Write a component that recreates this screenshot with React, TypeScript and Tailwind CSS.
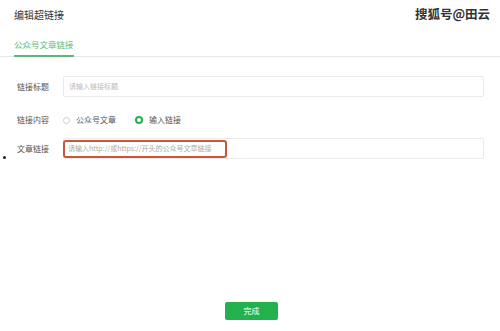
import React from 'react';

const cn = '"Noto Sans CJK SC", "Liberation Sans", sans-serif';

export default function App() {
  return (
    <div className="relative w-[500px] h-[331px] bg-white overflow-hidden" style={{ fontFamily: cn }}>
      {/* watermark */}
      <div className="absolute right-[10px] top-[5px] text-[12.5px] font-bold text-[#333] [text-shadow:0_0_2px_#fff]">
        搜狐号@田云
      </div>

      <div className="pt-[8px] pl-[14px] text-[10px] text-[#333] leading-[14px]">编辑超链接</div>

      <div className="mt-[16px] flex border-b border-[#e8e8e8]">
        <div className="ml-[14px] pb-[5px] text-[8.5px] leading-[12px] text-[#5cb87a] border-b-2 border-[#5cb87a] mb-[-1px] whitespace-nowrap">
          公众号文章链接
        </div>
      </div>

      <div className="pl-[17px] pr-[16px] mt-[19px] flex flex-col">
        <div className="flex items-center h-[21px]">
          <span className="w-[46px] text-[8px] text-[#555]">链接标题</span>
          <div className="flex-1 h-[21px] border border-[#eaeaea] rounded-[2px] flex items-center pl-[5px] text-[7px] text-[#bbb]">
            请输入链接标题
          </div>
        </div>

        <div className="flex items-center h-[16px] mt-[15px] text-[8px] text-[#555]">
          <span className="w-[46px]">链接内容</span>
          <span className="w-[7px] h-[7px] rounded-full border border-[#ccc]" />
          <span className="ml-[6px]">公众号文章</span>
          <span className="ml-[19px] w-[8px] h-[8px] rounded-full border-[2.5px] border-[#22b14c] bg-white" />
          <span className="ml-[6px]">输入链接</span>
        </div>

        <div className="flex items-center h-[21px] mt-[10px]">
          <span className="w-[46px] text-[8px] text-[#555]">文章链接</span>
          <div className="flex-1 h-[21px] border border-[#eaeaea] rounded-[2px] flex items-center">
            <div className="h-[18px] w-[164px] -ml-px border-2 border-[#c9553a] rounded-[3px] flex items-center pl-[3px] text-[7px] text-[#aaa] whitespace-nowrap">
              请输入http://或https://开头的公众号文章链接
            </div>
          </div>
        </div>
      </div>

      <div className="absolute left-[3px] top-[156px] w-[3px] h-[3px] rounded-full bg-[#222]" />

      <div className="absolute left-[225px] top-[302px] w-[53px] h-[18px] rounded-[2px] bg-[#22b14c] flex items-center justify-center text-[8px] text-white">
        完成
      </div>
    </div>
  );
}
